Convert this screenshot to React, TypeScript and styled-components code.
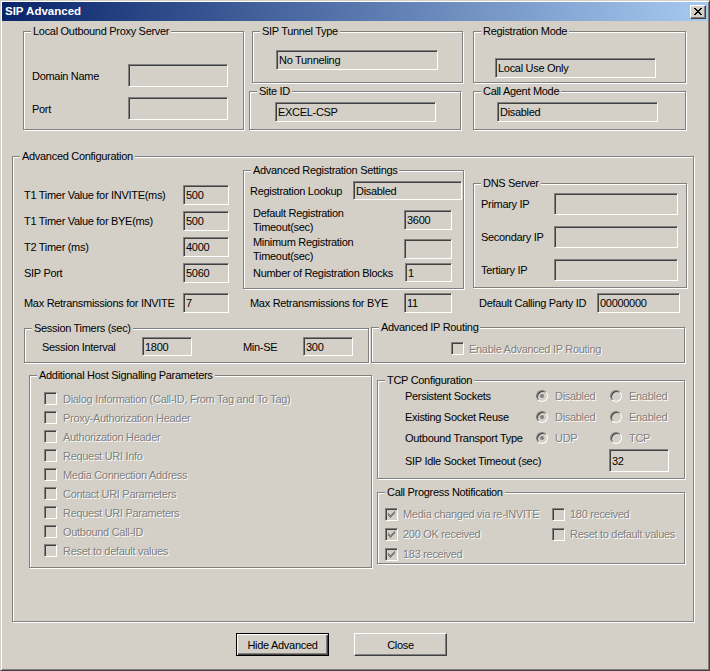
import { ReactNode } from "react"
import styled, { createGlobalStyle } from "styled-components"

const Colors = {
    FACE: "#d4d0c8",
    SHADOW: "#808080",
    DARK: "#404040",
    LIGHT: "#ffffff",
    TEXT: "#000000",
}

const CHECK_GLYPH = ["......X", ".....XX", "X...XXX", "XX.XXX.", "XXXXX..", ".XXX...", "..X...."]
const CLOSE_GLYPH = ["XX....XX", ".XX..XX.", "..XXXX..", "...XX...", "..XXXX..", ".XX..XX.", "XX....XX"]

const GlobalStyle = createGlobalStyle`
    html, body {
        margin: 0;
        padding: 0;
        background: ${Colors.FACE};
    }
    body {
        font-family: "Liberation Sans", Arial, sans-serif;
        font-size: 11px;
        letter-spacing: -0.3px;
        color: ${Colors.TEXT};
    }
`

const WindowStyle = styled.div`
    width: 710px;
    height: 671px;
    box-sizing: border-box;
    display: flex;
    flex-direction: column;
    padding: 1px;
    background: ${Colors.FACE};
    border: 1px solid;
    border-color: ${Colors.FACE} ${Colors.DARK} ${Colors.DARK} ${Colors.FACE};
    box-shadow: inset 1px 1px 0 ${Colors.LIGHT}, inset -1px -1px 0 ${Colors.SHADOW};
`

const TitleBarStyle = styled.div`
    height: 19px;
    display: flex;
    align-items: flex-start;
    justify-content: space-between;
    padding: 0 2px 0 3px;
    background: linear-gradient(to right, #0a246a, #a6caf0);
    flex-shrink: 0;
`

const TitleTextStyle = styled.div`
    color: ${Colors.LIGHT};
    font-weight: bold;
    font-size: 11.5px;
    letter-spacing: 0;
    line-height: 19px;
`

const CaptionButtonStyle = styled.div`
    margin-top: 3px;
    width: 16px;
    height: 14px;
    box-sizing: border-box;
    display: flex;
    align-items: center;
    justify-content: center;
    padding-bottom: 1px;
    background: ${Colors.FACE};
    border: 1px solid;
    border-color: ${Colors.LIGHT} ${Colors.DARK} ${Colors.DARK} ${Colors.LIGHT};
    box-shadow: inset -1px -1px 0 ${Colors.SHADOW};
`

const PixelSvgStyle = styled.svg`
    display: block;
    flex-shrink: 0;
`

const BodyStyle = styled.div`
    display: flex;
    flex-direction: column;
    flex: 1;
`

const TopRowStyle = styled.div`
    display: flex;
    align-items: flex-start;
    margin-top: 10px;
    padding-left: 21px;
`

const ColumnStyle = styled.div<{ $w: number; $ml?: number; $h?: number; $spread?: boolean }>`
    display: flex;
    flex-direction: column;
    flex-shrink: 0;
    width: ${(p) => p.$w}px;
    margin-left: ${(p) => p.$ml ?? 0}px;
    ${(p) => (p.$h ? `height: ${p.$h}px;` : "")}
    justify-content: ${(p) => (p.$spread ? "space-between" : "flex-start")};
`

const GroupBoxStyle = styled.div<{ $w: number; $h: number; $mt?: number; $ml?: number }>`
    position: relative;
    box-sizing: border-box;
    flex-shrink: 0;
    display: flex;
    flex-direction: column;
    width: ${(p) => p.$w}px;
    height: ${(p) => p.$h}px;
    margin-top: ${(p) => p.$mt ?? 0}px;
    margin-left: ${(p) => p.$ml ?? 0}px;
    border: 1px solid ${Colors.SHADOW};
    box-shadow: 1px 1px 0 ${Colors.LIGHT}, inset 1px 1px 0 ${Colors.LIGHT};
`

const GroupLabelStyle = styled.span`
    position: absolute;
    top: -7px;
    left: 7px;
    padding: 0 2px;
    line-height: 13px;
    white-space: nowrap;
    background: ${Colors.FACE};
`

const AdvancedBoxStyle = styled(GroupBoxStyle)`
    margin-top: 26px;
    margin-left: 10px;
`

const ColumnsRowStyle = styled.div`
    display: flex;
    margin-top: 13px;
    padding-left: 11px;
`

const SectionRowStyle = styled.div<{ $mt: number; $pl: number; $align: string }>`
    display: flex;
    align-items: ${(p) => p.$align};
    margin-top: ${(p) => p.$mt}px;
    padding-left: ${(p) => p.$pl}px;
`

const FieldStackStyle = styled.div`
    display: flex;
    flex-direction: column;
    gap: 6px;
    margin-top: 15px;
`

const FieldRowStyle = styled.div<{ $top?: number; $left?: number; $h?: number }>`
    display: flex;
    align-items: center;
    flex-shrink: 0;
    margin-top: ${(p) => p.$top ?? 0}px;
    padding-left: ${(p) => p.$left ?? 0}px;
    min-height: ${(p) => p.$h ?? 20}px;
`

const LabelStyle = styled.div<{ $w: number; $ml?: number }>`
    width: ${(p) => p.$w}px;
    margin-left: ${(p) => p.$ml ?? 0}px;
    flex-shrink: 0;
    line-height: 14px;
    white-space: nowrap;
`

const TextBoxStyle = styled.div<{ $w: number; $h: number }>`
    box-sizing: border-box;
    flex-shrink: 0;
    width: ${(p) => p.$w}px;
    height: ${(p) => p.$h}px;
    display: flex;
    align-items: center;
    padding: 0 2px;
    overflow: hidden;
    white-space: nowrap;
    background: ${Colors.FACE};
    border: 1px solid;
    border-color: ${Colors.SHADOW} ${Colors.LIGHT} ${Colors.LIGHT} ${Colors.SHADOW};
    box-shadow: inset 1px 1px 0 ${Colors.DARK}, inset -1px -1px 0 ${Colors.FACE};
`

const CheckListStyle = styled.div<{ $mt: number; $pl: number; $row: number }>`
    display: flex;
    flex-direction: column;
    margin-top: ${(p) => p.$mt}px;
    padding-left: ${(p) => p.$pl}px;

    & > div {
        height: ${(p) => p.$row}px;
    }
`

const CheckGridStyle = styled.div`
    display: grid;
    grid-template-columns: 167px 1fr;
    grid-auto-rows: 20px;
    margin-top: 11px;
    padding-left: 7px;
`

const OptionStyle = styled.div<{ $gap: number; $w?: number }>`
    display: flex;
    align-items: center;
    gap: ${(p) => p.$gap}px;
    flex-shrink: 0;
    ${(p) => (p.$w ? `width: ${p.$w}px;` : "")}
`

const CheckBoxStyle = styled.div`
    width: 13px;
    height: 13px;
    box-sizing: border-box;
    flex-shrink: 0;
    display: flex;
    align-items: center;
    justify-content: center;
    background: ${Colors.FACE};
    border: 1px solid;
    border-color: ${Colors.SHADOW} ${Colors.LIGHT} ${Colors.LIGHT} ${Colors.SHADOW};
    box-shadow: inset 1px 1px 0 ${Colors.DARK}, inset -1px -1px 0 ${Colors.FACE};
`

const RadioStyle = styled.div`
    width: 12px;
    height: 12px;
    box-sizing: border-box;
    flex-shrink: 0;
    border-radius: 50%;
    display: flex;
    align-items: center;
    justify-content: center;
    background: ${Colors.FACE};
    border: 1px solid;
    border-color: ${Colors.SHADOW} ${Colors.LIGHT} ${Colors.LIGHT} ${Colors.SHADOW};
    box-shadow: inset 1px 1px 0 ${Colors.DARK}, inset -1px -1px 0 ${Colors.FACE};
`

const RadioDotStyle = styled.div`
    width: 4px;
    height: 4px;
    border-radius: 50%;
    background: ${Colors.SHADOW};
`

const DisabledTextStyle = styled.span`
    color: ${Colors.SHADOW};
    text-shadow: 1px 1px 0 ${Colors.LIGHT};
    white-space: nowrap;
    line-height: 14px;
`

const ButtonRowStyle = styled.div`
    display: flex;
    gap: 25px;
    margin-top: 11px;
    padding-left: 234px;
`

const ButtonStyle = styled.div<{ $default?: boolean }>`
    width: 93px;
    height: 23px;
    box-sizing: border-box;
    display: flex;
    align-items: center;
    justify-content: center;
    background: ${Colors.FACE};
    border: 1px solid;
    ${(p) =>
        p.$default
            ? `border-color: #000;
               box-shadow: inset 1px 1px 0 ${Colors.LIGHT}, inset -1px -1px 0 ${Colors.DARK}, inset -2px -2px 0 ${Colors.SHADOW};`
            : `border-color: ${Colors.LIGHT} ${Colors.DARK} ${Colors.DARK} ${Colors.LIGHT};
               box-shadow: inset -1px -1px 0 ${Colors.SHADOW};`}
`

const Pixels = ({ rows, color }: { rows: string[]; color: string }) => (
    <PixelSvgStyle width={rows[0].length} height={rows.length} shapeRendering="crispEdges">
        {rows.flatMap((row, y) =>
            row.split("").map((c, x) => (c === "X" ? <rect key={`${x}-${y}`} x={x} y={y} width={1} height={1} fill={color} /> : null)),
        )}
    </PixelSvgStyle>
)

type GroupBoxProps = { label: string; width: number; height: number; mt?: number; ml?: number; children?: ReactNode }

const GroupBox = ({ label, width, height, mt, ml, children }: GroupBoxProps) => (
    <GroupBoxStyle $w={width} $h={height} $mt={mt} $ml={ml}>
        <GroupLabelStyle>{label}</GroupLabelStyle>
        {children}
    </GroupBoxStyle>
)

const TextBox = ({ width, height = 20, value = "" }: { width: number; height?: number; value?: string }) => (
    <TextBoxStyle $w={width} $h={height}>
        {value}
    </TextBoxStyle>
)

const CheckBox = ({ label, checked, gap = 5 }: { label: string; checked?: boolean; gap?: number }) => (
    <OptionStyle $gap={gap}>
        <CheckBoxStyle>{checked && <Pixels rows={CHECK_GLYPH} color={Colors.SHADOW} />}</CheckBoxStyle>
        <DisabledTextStyle>{label}</DisabledTextStyle>
    </OptionStyle>
)

const Radio = ({ label, checked }: { label: string; checked?: boolean }) => (
    <OptionStyle $gap={7} $w={74}>
        <RadioStyle>{checked && <RadioDotStyle />}</RadioStyle>
        <DisabledTextStyle>{label}</DisabledTextStyle>
    </OptionStyle>
)

const hostParams = [
    "Dialog Information (Call-ID, From Tag and To Tag)",
    "Proxy-Authorization Header",
    "Authorization Header",
    "Request URI Info",
    "Media Connection Address",
    "Contact URI Parameters",
    "Request URI Parameters",
    "Outbound Call-ID",
    "Reset to default values",
]

const timers = [
    { label: "T1 Timer Value for INVITE(ms)", value: "500" },
    { label: "T1 Timer Value for BYE(ms)", value: "500" },
    { label: "T2 Timer (ms)", value: "4000" },
    { label: "SIP Port", value: "5060" },
]

const tcpOptions = [
    { label: "Persistent Sockets", a: "Disabled", b: "Enabled" },
    { label: "Existing Socket Reuse", a: "Disabled", b: "Enabled" },
    { label: "Outbound Transport Type", a: "UDP", b: "TCP" },
]

export default function App() {
    return (
        <>
            <GlobalStyle />
            <WindowStyle>
                <TitleBarStyle>
                    <TitleTextStyle>SIP Advanced</TitleTextStyle>
                    <CaptionButtonStyle>
                        <Pixels rows={CLOSE_GLYPH} color="#000" />
                    </CaptionButtonStyle>
                </TitleBarStyle>
                <BodyStyle>
                    <TopRowStyle>
                        <GroupBox label="Local Outbound Proxy Server" width={221} height={99}>
                            <FieldRowStyle $top={32} $left={8} $h={23}>
                                <LabelStyle $w={96}>Domain Name</LabelStyle>
                                <TextBox width={100} height={23} />
                            </FieldRowStyle>
                            <FieldRowStyle $top={10} $left={8} $h={23}>
                                <LabelStyle $w={96}>Port</LabelStyle>
                                <TextBox width={100} height={23} />
                            </FieldRowStyle>
                        </GroupBox>
                        <ColumnStyle $w={214} $ml={5}>
                            <GroupBox label="SIP Tunnel Type" width={211} height={52} ml={3}>
                                <FieldRowStyle $top={18} $left={23}>
                                    <TextBox width={162} value="No Tunneling" />
                                </FieldRowStyle>
                            </GroupBox>
                            <GroupBox label="Site ID" width={212} height={39} mt={8}>
                                <FieldRowStyle $top={10} $left={25}>
                                    <TextBox width={161} value="EXCEL-CSP" />
                                </FieldRowStyle>
                            </GroupBox>
                        </ColumnStyle>
                        <ColumnStyle $w={214} $ml={10}>
                            <GroupBox label="Registration Mode" width={213} height={52}>
                                <FieldRowStyle $top={26} $left={21}>
                                    <TextBox width={161} value="Local Use Only" />
                                </FieldRowStyle>
                            </GroupBox>
                            <GroupBox label="Call Agent Mode" width={213} height={39} mt={8}>
                                <FieldRowStyle $top={10} $left={23}>
                                    <TextBox width={161} value="Disabled" />
                                </FieldRowStyle>
                            </GroupBox>
                        </ColumnStyle>
                    </TopRowStyle>

                    <AdvancedBoxStyle $w={682} $h={466}>
                        <GroupLabelStyle>Advanced Configuration</GroupLabelStyle>
                        <ColumnsRowStyle>
                            <ColumnStyle $w={205} $h={143} $spread>
                                <FieldStackStyle>
                                    {timers.map((t) => (
                                        <FieldRowStyle key={t.label}>
                                            <LabelStyle $w={159}>{t.label}</LabelStyle>
                                            <TextBox width={46} value={t.value} />
                                        </FieldRowStyle>
                                    ))}
                                </FieldStackStyle>
                                <FieldRowStyle>
                                    <LabelStyle $w={159}>Max Retransmissions for INVITE</LabelStyle>
                                    <TextBox width={46} value="7" />
                                </FieldRowStyle>
                            </ColumnStyle>
                            <ColumnStyle $w={221} $ml={14} $h={143} $spread>
                                <GroupBox label="Advanced Registration Settings" width={221} height={119}>
                                    <FieldRowStyle $top={10} $left={6} $h={19}>
                                        <LabelStyle $w={103}>Registration Lookup</LabelStyle>
                                        <TextBox width={109} height={19} value="Disabled" />
                                    </FieldRowStyle>
                                    <FieldRowStyle $top={6} $left={9}>
                                        <LabelStyle $w={151}>
                                            Default Registration
                                            <br />
                                            Timeout(sec)
                                        </LabelStyle>
                                        <TextBox width={48} value="3600" />
                                    </FieldRowStyle>
                                    <FieldRowStyle $top={1} $left={9}>
                                        <LabelStyle $w={151}>
                                            Minimum Registration
                                            <br />
                                            Timeout(sec)
                                        </LabelStyle>
                                        <TextBox width={48} />
                                    </FieldRowStyle>
                                    <FieldRowStyle $left={9} $h={19}>
                                        <LabelStyle $w={152}>Number of Registration Blocks</LabelStyle>
                                        <TextBox width={47} height={19} value="1" />
                                    </FieldRowStyle>
                                </GroupBox>
                                <FieldRowStyle $left={7}>
                                    <LabelStyle $w={154}>Max Retransmissions for BYE</LabelStyle>
                                    <TextBox width={48} value="11" />
                                </FieldRowStyle>
                            </ColumnStyle>
                            <ColumnStyle $w={214} $ml={9} $h={143} $spread>
                                <GroupBox label="DNS Server" width={214} height={105} mt={13}>
                                    <FieldRowStyle $top={9} $left={7} $h={22}>
                                        <LabelStyle $w={73}>Primary IP</LabelStyle>
                                        <TextBox width={124} height={22} />
                                    </FieldRowStyle>
                                    <FieldRowStyle $top={11} $left={7} $h={22}>
                                        <LabelStyle $w={73}>Secondary IP</LabelStyle>
                                        <TextBox width={124} height={22} />
                                    </FieldRowStyle>
                                    <FieldRowStyle $top={11} $left={7} $h={22}>
                                        <LabelStyle $w={73}>Tertiary IP</LabelStyle>
                                        <TextBox width={124} height={22} />
                                    </FieldRowStyle>
                                </GroupBox>
                                <FieldRowStyle $left={6}>
                                    <LabelStyle $w={118}>Default Calling Party ID</LabelStyle>
                                    <TextBox width={83} value="00000000" />
                                </FieldRowStyle>
                            </ColumnStyle>
                        </ColumnsRowStyle>

                        <SectionRowStyle $mt={14} $pl={11} $align="flex-end">
                            <GroupBox label="Session Timers (sec)" width={345} height={35}>
                                <FieldRowStyle $top={8} $left={17} $h={19}>
                                    <LabelStyle $w={100}>Session Interval</LabelStyle>
                                    <TextBox width={50} height={19} value="1800" />
                                    <LabelStyle $w={60} $ml={51}>
                                        Min-SE
                                    </LabelStyle>
                                    <TextBox width={50} height={19} value="300" />
                                </FieldRowStyle>
                            </GroupBox>
                            <GroupBox label="Advanced IP Routing" width={314} height={36} ml={2}>
                                <FieldRowStyle $top={13} $left={79} $h={15}>
                                    <CheckBox label="Enable Advanced IP Routing" />
                                </FieldRowStyle>
                            </GroupBox>
                        </SectionRowStyle>

                        <SectionRowStyle $mt={12} $pl={16} $align="flex-start">
                            <GroupBox label="Additional Host Signalling Parameters" width={343} height={193}>
                                <CheckListStyle $mt={13} $pl={14} $row={19}>
                                    {hostParams.map((p) => (
                                        <CheckBox key={p} label={p} gap={6} />
                                    ))}
                                </CheckListStyle>
                            </GroupBox>
                            <ColumnStyle $w={308} $ml={5}>
                                <GroupBox label="TCP Configuration" width={308} height={99} mt={5}>
                                    <CheckListStyle $mt={4} $pl={27} $row={21}>
                                        {tcpOptions.map((o) => (
                                            <FieldRowStyle key={o.label}>
                                                <LabelStyle $w={131}>{o.label}</LabelStyle>
                                                <Radio label={o.a} checked />
                                                <Radio label={o.b} />
                                            </FieldRowStyle>
                                        ))}
                                    </CheckListStyle>
                                    <FieldRowStyle $top={1} $left={27} $h={23}>
                                        <LabelStyle $w={204}>SIP Idle Socket Timeout (sec)</LabelStyle>
                                        <TextBox width={60} height={23} value="32" />
                                    </FieldRowStyle>
                                </GroupBox>
                                <GroupBox label="Call Progress Notification" width={308} height={72} mt={13}>
                                    <CheckGridStyle>
                                        <CheckBox label="Media changed via re-INVITE" checked />
                                        <CheckBox label="180 received" />
                                        <CheckBox label="200 OK received" checked />
                                        <CheckBox label="Reset to default values" />
                                        <CheckBox label="183 received" checked />
                                    </CheckGridStyle>
                                </GroupBox>
                            </ColumnStyle>
                        </SectionRowStyle>
                    </AdvancedBoxStyle>

                    <ButtonRowStyle>
                        <ButtonStyle $default>Hide Advanced</ButtonStyle>
                        <ButtonStyle>Close</ButtonStyle>
                    </ButtonRowStyle>
                </BodyStyle>
            </WindowStyle>
        </>
    )
}
